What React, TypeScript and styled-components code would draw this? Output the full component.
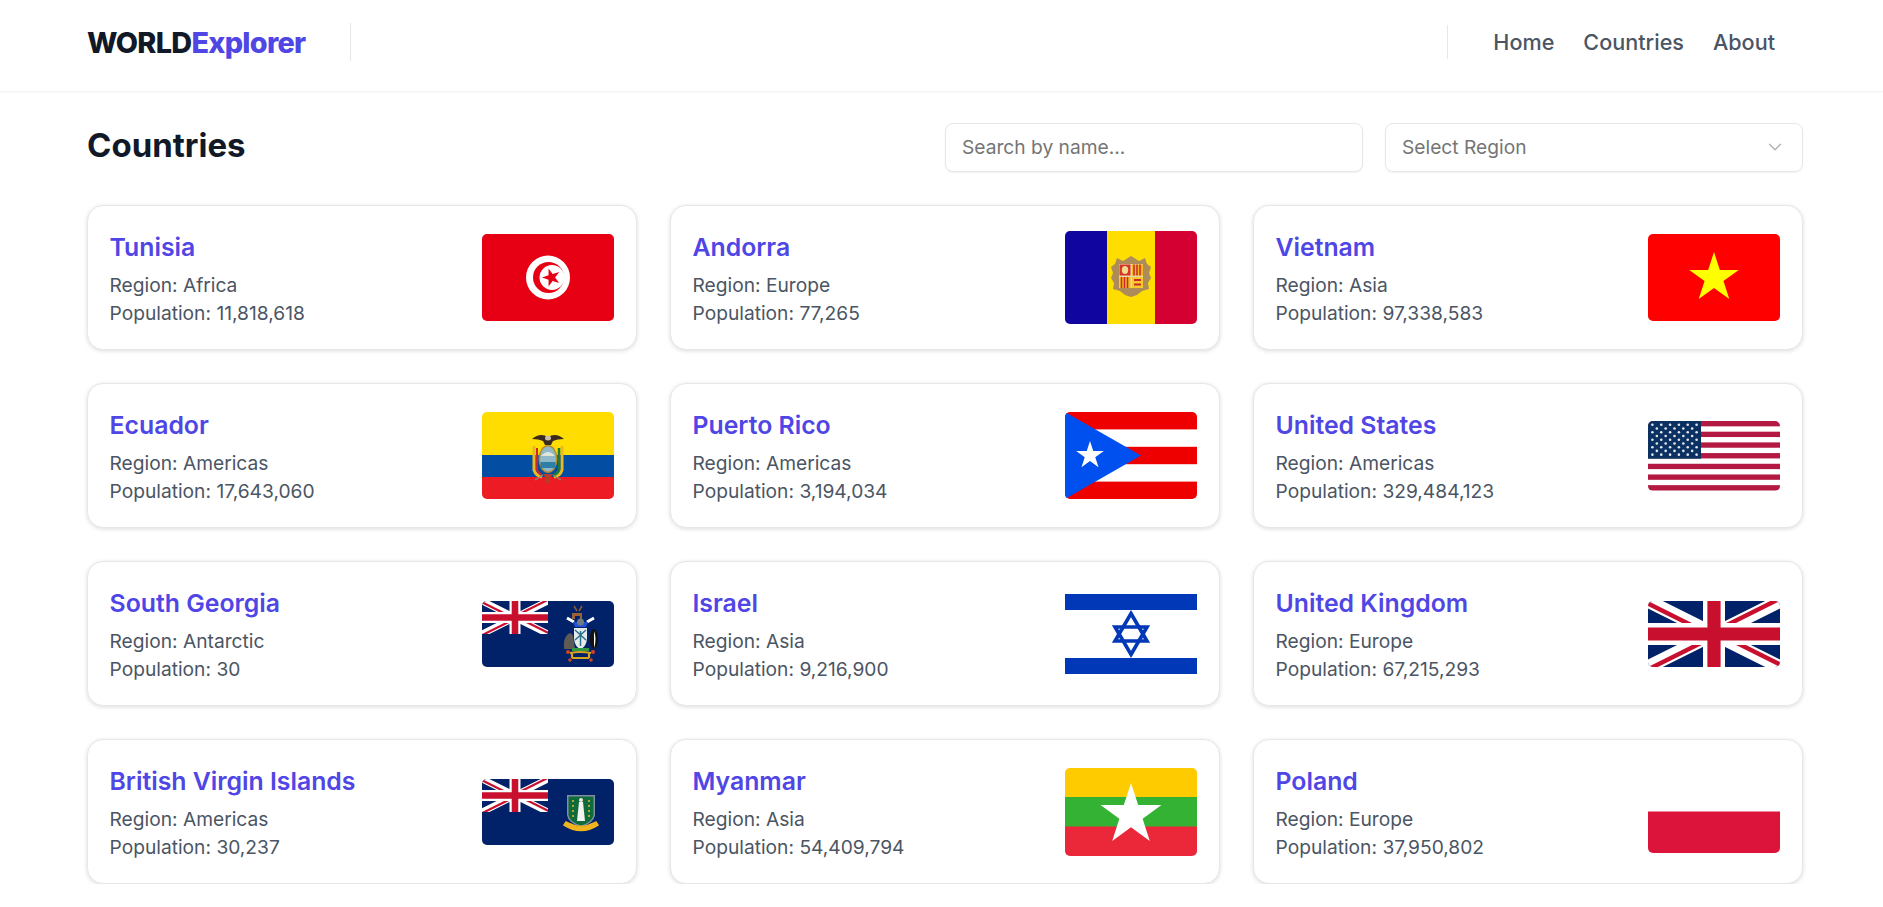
import { ReactNode } from 'react';
import styled, { createGlobalStyle } from 'styled-components';
import { ChevronDown } from 'lucide-react';

const GlobalStyle = createGlobalStyle`
  * { box-sizing: border-box; }
  html, body { margin: 0; padding: 0; background: #fff; }
  body { font-family: Inter, "Liberation Sans", sans-serif; overflow: hidden; }
`;

const star = (cx: number, cy: number, r: number, rot = 0) => {
  const pts: string[] = [];
  for (let i = 0; i < 10; i++) {
    const rad = i % 2 === 0 ? r : r * 0.382;
    const a = ((-90 + rot + i * 36) * Math.PI) / 180;
    pts.push(`${(cx + rad * Math.cos(a)).toFixed(2)},${(cy + rad * Math.sin(a)).toFixed(2)}`);
  }
  return pts.join(' ');
};

const Union = ({ id, width, height }: { id: string; width: number; height: number }) => (
  <svg x="0" y="0" width={width} height={height} viewBox="0 0 60 30" preserveAspectRatio="none">
    <clipPath id={id}>
      <path d="M30,15 h30 v15 z v15 h-30 z h-30 v-15 z v-15 h30 z" />
    </clipPath>
    <rect width="60" height="30" fill="#012169" />
    <path d="M0,0 L60,30 M60,0 L0,30" stroke="#fff" strokeWidth="6" />
    <path d="M0,0 L60,30 M60,0 L0,30" clipPath={`url(#${id})`} stroke="#C8102E" strokeWidth="4" />
    <path d="M30,0 v30 M0,15 h60" stroke="#fff" strokeWidth="10" />
    <path d="M30,0 v30 M0,15 h60" stroke="#C8102E" strokeWidth="6" />
  </svg>
);

const FlagFrame = styled.svg<{ $h: number }>`
  display: block;
  flex: none;
  width: 132px;
  height: ${({ $h }) => $h}px;
  border-radius: 5px;
`;

const Flag = ({ h, children }: { h: number; children: ReactNode }) => (
  <FlagFrame $h={h} viewBox={`0 0 132 ${h}`}>
    {children}
  </FlagFrame>
);

const Tunisia = () => (
  <Flag h={87}>
    <rect width="132" height="87" fill="#e70013" />
    <circle cx="66" cy="43.5" r="22" fill="#fff" />
    <circle cx="66.5" cy="43.5" r="15.5" fill="#e70013" />
    <circle cx="70" cy="43.5" r="12.5" fill="#fff" />
    <polygon points={star(69.5, 43.5, 9.5, -90)} fill="#e70013" />
  </Flag>
);

const Andorra = () => (
  <Flag h={93}>
    <rect width="42" height="93" fill="#10069f" />
    <rect x="42" width="48" height="93" fill="#fedd00" />
    <rect x="90" width="42" height="93" fill="#d50032" />
    <path d="M52 27 l6 3 l8 -5 l8 5 l6 -3 l2 6 l4 3 l-2 6 l2 5 l-3 5 l1 6 l-7 2 l-5 4 l-6 2 l-6 -2 l-5 -4 l-7 -2 l1 -6 l-3 -5 l2 -5 l-2 -6 l4 -3 z" fill="#ad8c5a" />
    <rect x="54" y="33" width="24" height="24" fill="#e8d9a8" />
    <rect x="54.5" y="33.5" width="11" height="11" fill="#d6332a" />
    <ellipse cx="60" cy="39" rx="3.2" ry="4" fill="#f5d98a" />
    <rect x="67" y="33.5" width="11" height="11" fill="#f2b81b" />
    <path d="M69 33.5 v11 M72 33.5 v11 M75 33.5 v11" stroke="#c8282c" strokeWidth="1.5" />
    <rect x="54.5" y="46" width="11" height="11" fill="#f2b81b" />
    <path d="M56.5 46 v11 M59.5 46 v11 M62.5 46 v11" stroke="#c8282c" strokeWidth="1.5" />
    <rect x="67" y="46" width="11" height="11" fill="#f7c92b" />
    <path d="M69 49 h7 M69 53.5 h7" stroke="#c8282c" strokeWidth="2.2" />
  </Flag>
);

const Vietnam = () => (
  <Flag h={87}>
    <rect width="132" height="87" fill="#ff0000" />
    <polygon points={star(66, 44, 26)} fill="#ffff00" />
  </Flag>
);

const Ecuador = () => (
  <Flag h={87}>
    <rect width="132" height="44" fill="#ffdd00" />
    <rect y="43" width="132" height="22" fill="#034ea2" />
    <rect y="65" width="132" height="22" fill="#ed1c24" />
    <path d="M50 27 q8 -7 16 -2 q8 -5 16 2 q-7 0 -11 2 l-2 4 h-6 l-2 -4 q-4 -2 -11 -2 z" fill="#3a2a1f" />
    <ellipse cx="66" cy="26" rx="3" ry="2.5" fill="#cbbfa8" />
    <path d="M52 34 v24 q2 6 8 7 M80 34 v24 q-2 6 -8 7" fill="none" stroke="#e8b923" strokeWidth="3" />
    <path d="M55 36 v22 q2 4 5 5" fill="none" stroke="#c8282c" strokeWidth="2" />
    <path d="M77 36 v22 q-2 4 -5 5" fill="none" stroke="#1f7a3a" strokeWidth="2.5" />
    <ellipse cx="66" cy="47" rx="9.5" ry="14" fill="#b58a2e" />
    <ellipse cx="66" cy="47" rx="8" ry="12.5" fill="#8fb9c9" />
    <path d="M59 44 q7 -8 14 0 z" fill="#dfe6d8" />
    <rect x="58.5" y="50" width="15" height="6" fill="#2d7fa6" />
    <path d="M61 62 h10 l-3 4 v5 h-4 v-5 z" fill="#b5402a" />
    <path d="M53 68 l8 -5 M79 68 l-8 -5" stroke="#8a8a7a" strokeWidth="1.2" />
  </Flag>
);

const PuertoRico = () => (
  <Flag h={87}>
    <rect width="132" height="87" fill="#ef0000" />
    <rect y="17.4" width="132" height="17.4" fill="#fff" />
    <rect y="52.2" width="132" height="17.4" fill="#fff" />
    <polygon points="0,0 76,43.5 0,87" fill="#0050f0" />
    <polygon points={star(25, 43.5, 14.5)} fill="#fff" />
  </Flag>
);

const UnitedStates = () => {
  const s = 69.5 / 13;
  const stars: ReactNode[] = [];
  for (let r = 0; r < 9; r++) {
    const n = r % 2 === 0 ? 6 : 5;
    for (let c = 0; c < n; c++) {
      const x = ((r % 2 === 0 ? 1 : 2) + c * 2) * (53 / 12);
      stars.push(<circle key={`${r}-${c}`} cx={x} cy={(r + 1) * (37.4 / 10)} r="1.3" fill="#e4e7ee" />);
    }
  }
  return (
    <Flag h={70}>
      <rect width="132" height="70" fill="#fff" />
      {Array.from({ length: 7 }).map((_, i) => (
        <rect key={i} y={i * 2 * s} width="132" height={s} fill="#b31942" />
      ))}
      <rect width="53" height="37.7" fill="#0a3161" />
      {stars}
    </Flag>
  );
};

const SouthGeorgia = () => (
  <Flag h={66}>
    <rect width="132" height="66" fill="#012169" />
    <Union id="ug-sg" width={66} height={33} />
    <path d="M92 5 l3 5 M100 5 l-3 5" stroke="#8a5a32" strokeWidth="1.6" />
    <path d="M90 12 h10 v6 h-2 v-3 h-5 v3 h-3 z" fill="#9a6238" />
    <path d="M85 17 l7 4 M112 17 l-7 4" stroke="#fff" strokeWidth="3" />
    <path d="M91 21 h15 l-2 5 h-11 z" fill="#1e50d8" />
    <circle cx="98.500" cy="21" r="3.500" fill="#6f7c82" />
    <path d="M92 27 h13 v11 q-1 8 -6.500 10 q-5.500 -2 -6.500 -10 z" fill="#e3ecea" />
    <path d="M93 29 l11 10 M104 29 l-11 10 M98.500 30 v15" stroke="#2f6f8f" strokeWidth="1.500" />
    <path d="M82 46 q-1 -8 4 -13 q4 -2 5 2 l2 13 h-11 z" fill="#5e5a56" />
    <ellipse cx="112" cy="38" rx="4.200" ry="10" fill="#111" />
    <path d="M112 30 q3 8 0 17 z" fill="#fff" />
    <path d="M90 47 h17 v3 h-17 z" fill="#2f9a3f" />
    <path d="M88 52 q10 -2 21 0 M90 52 v5 M107 52 v5" fill="none" stroke="#d8a41c" strokeWidth="2.200" />
    <path d="M90 57 h17" stroke="#d8a41c" strokeWidth="2" />
    <circle cx="86" cy="51" r="2" fill="#d4431e" />
    <circle cx="111" cy="51" r="2" fill="#d4431e" />
    <circle cx="88" cy="59" r="1.800" fill="#d4431e" />
    <circle cx="109" cy="59" r="1.800" fill="#d4431e" />
  </Flag>
);

const Israel = () => (
  <Flag h={96}>
    <rect width="132" height="96" fill="#fff" />
    <rect y="8" width="132" height="16" fill="#0038b8" />
    <rect y="72" width="132" height="16" fill="#0038b8" />
    <polygon points="66,27.500 82,55 50,55" fill="none" stroke="#0038b8" strokeWidth="3.600" />
    <polygon points="66,68.500 82,41 50,41" fill="none" stroke="#0038b8" strokeWidth="3.600" />
  </Flag>
);

const UnitedKingdom = () => (
  <Flag h={66}>
    <Union id="ug-uk" width={132} height={66} />
  </Flag>
);

const VirginIslands = () => (
  <Flag h={66}>
    <rect width="132" height="66" fill="#012169" />
    <Union id="ug-vi" width={66} height={33} />
    <path d="M85 16 h28 v20 q-1 8 -14 12 q-13 -4 -14 -12 z" fill="#7d8fa0" />
    <path d="M86.500 17.500 h25 v18.500 q-1 7 -12.500 10.500 q-11.500 -3.500 -12.500 -10.500 z" fill="#0f6b3a" />
    <path d="M97 23 h4 l2 19 h-8 z" fill="#f3f3f0" />
    <circle cx="99" cy="21" r="2" fill="#f3e8d8" />
    {[22, 27, 32, 37].map((y) => (
      <g key={y}>
        <circle cx="91" cy={y} r="1.100" fill="#e2b43a" />
        <circle cx="107" cy={y} r="1.100" fill="#e2b43a" />
      </g>
    ))}
    <path d="M82 46 q17 11 34 0 l-2 -3 l-2 1 q-13 7 -26 0 l-2 -1 z" fill="#eeb51f" stroke="#eeb51f" strokeWidth="1.500" />
  </Flag>
);

const Myanmar = () => (
  <Flag h={88}>
    <rect width="132" height="30" fill="#fecb00" />
    <rect y="29" width="132" height="30" fill="#34b233" />
    <rect y="58.500" width="132" height="30" fill="#ea2839" />
    <polygon points={star(66, 47, 32)} fill="#fff" />
  </Flag>
);

const Poland = () => (
  <Flag h={83}>
    <rect width="132" height="41.500" fill="#fff" />
    <rect y="41.500" width="132" height="41.500" fill="#dc143c" />
  </Flag>
);

const COUNTRIES = [
  { name: 'Tunisia', region: 'Africa', population: '11,818,618', flag: <Tunisia /> },
  { name: 'Andorra', region: 'Europe', population: '77,265', flag: <Andorra /> },
  { name: 'Vietnam', region: 'Asia', population: '97,338,583', flag: <Vietnam /> },
  { name: 'Ecuador', region: 'Americas', population: '17,643,060', flag: <Ecuador /> },
  { name: 'Puerto Rico', region: 'Americas', population: '3,194,034', flag: <PuertoRico /> },
  { name: 'United States', region: 'Americas', population: '329,484,123', flag: <UnitedStates /> },
  { name: 'South Georgia', region: 'Antarctic', population: '30', flag: <SouthGeorgia /> },
  { name: 'Israel', region: 'Asia', population: '9,216,900', flag: <Israel /> },
  { name: 'United Kingdom', region: 'Europe', population: '67,215,293', flag: <UnitedKingdom /> },
  { name: 'British Virgin Islands', region: 'Americas', population: '30,237', flag: <VirginIslands /> },
  { name: 'Myanmar', region: 'Asia', population: '54,409,794', flag: <Myanmar /> },
  { name: 'Poland', region: 'Europe', population: '37,950,802', flag: <Poland /> },
];

export default function App() {
  return (
    <>
      <GlobalStyle />
      <Header>
        <LogoGroup>
          <Logo>
            WORLD<LogoAccent>Explorer</LogoAccent>
          </Logo>
          <Divider $h={38} />
        </LogoGroup>
        <NavGroup>
          <Divider $h={34} />
          <Nav>
            <NavLink href="#">Home</NavLink>
            <NavLink href="#">Countries</NavLink>
            <NavLink href="#">About</NavLink>
          </Nav>
        </NavGroup>
      </Header>
      <Main>
        <TopRow>
          <Title>Countries</Title>
          <Filters>
            <SearchInput placeholder="Search by name..." />
            <SelectBox>
              Select Region
              <ChevronDown size={22} color="#b0b0b0" strokeWidth={1.5} />
            </SelectBox>
          </Filters>
        </TopRow>
        <Grid>
          {COUNTRIES.map((c) => (
            <Card key={c.name}>
              <Info>
                <Name>{c.name}</Name>
                <Meta>Region: {c.region}</Meta>
                <Meta>Population: {c.population}</Meta>
              </Info>
              {c.flag}
            </Card>
          ))}
        </Grid>
      </Main>
    </>
  );
}

const Header = styled.header`
  display: flex;
  justify-content: space-between;
  align-items: center;
  height: 92px;
  padding: 0 108px 7px 87px;
  border-bottom: 1px solid #f3f4f6;
  box-shadow: 0 1px 2px rgba(0, 0, 0, 0.03);
`;

const LogoGroup = styled.div`
  display: flex;
  align-items: center;
  gap: 44px;
`;

const Logo = styled.div`
  font-size: 28.8px;
  font-weight: 800;
  letter-spacing: -0.7px;
  color: #111827;
`;

const LogoAccent = styled.span`
  color: #4f46e5;
`;

const Divider = styled.div<{ $h: number }>`
  width: 1px;
  height: ${({ $h }) => $h}px;
  background: #e5e7eb;
`;

const NavGroup = styled.div`
  display: flex;
  align-items: center;
  gap: 45px;
`;

const Nav = styled.nav`
  display: flex;
  gap: 29px;
`;

const NavLink = styled.a`
  font-size: 21.6px;
  font-weight: 500;
  color: #4b5563;
  text-decoration: none;
`;

const Main = styled.main`
  padding: 31px 80px 0 87px;
`;

const TopRow = styled.div`
  display: flex;
  justify-content: space-between;
  align-items: flex-start;
`;

const Title = styled.h1`
  margin: 0;
  font-size: 33px;
  line-height: 44px;
  font-weight: 700;
  color: #111827;
`;

const Filters = styled.div`
  display: flex;
  gap: 22px;
`;

const SearchInput = styled.input`
  width: 418px;
  height: 49px;
  padding: 0 16px 2px;
  border: 1px solid #e5e7eb;
  border-radius: 8px;
  box-shadow: 0 1px 2px rgba(0, 0, 0, 0.06);
  font-family: inherit;
  font-size: 19.2px;
  color: #111827;
  outline: none;

  &::placeholder {
    color: #757575;
    opacity: 1;
  }
`;

const SelectBox = styled.div`
  display: flex;
  justify-content: space-between;
  align-items: center;
  width: 418px;
  height: 49px;
  padding: 0 16px 2px;
  border: 1px solid #e5e7eb;
  border-radius: 8px;
  box-shadow: 0 1px 2px rgba(0, 0, 0, 0.06);
  font-size: 19.2px;
  color: #757575;
`;

const Grid = styled.div`
  display: grid;
  grid-template-columns: repeat(3, 1fr);
  gap: 33px;
  margin-top: 33px;
`;

const Card = styled.article`
  display: flex;
  justify-content: space-between;
  align-items: center;
  height: 145px;
  padding: 0 22px 0 21.5px;
  border: 1px solid #e5e7eb;
  border-radius: 16px;
  box-shadow: 0 1px 4px rgba(0, 0, 0, 0.14);
  background: #fff;
`;

const Info = styled.div`
  display: flex;
  flex-direction: column;
  padding-top: 2px;
`;

const Name = styled.h2`
  margin: 0 0 7px;
  font-size: 24.8px;
  line-height: 36px;
  font-weight: 600;
  color: #4f46e5;
`;

const Meta = styled.p`
  margin: 0;
  font-size: 19.2px;
  line-height: 27.6px;
  color: #4b5563;
`;
